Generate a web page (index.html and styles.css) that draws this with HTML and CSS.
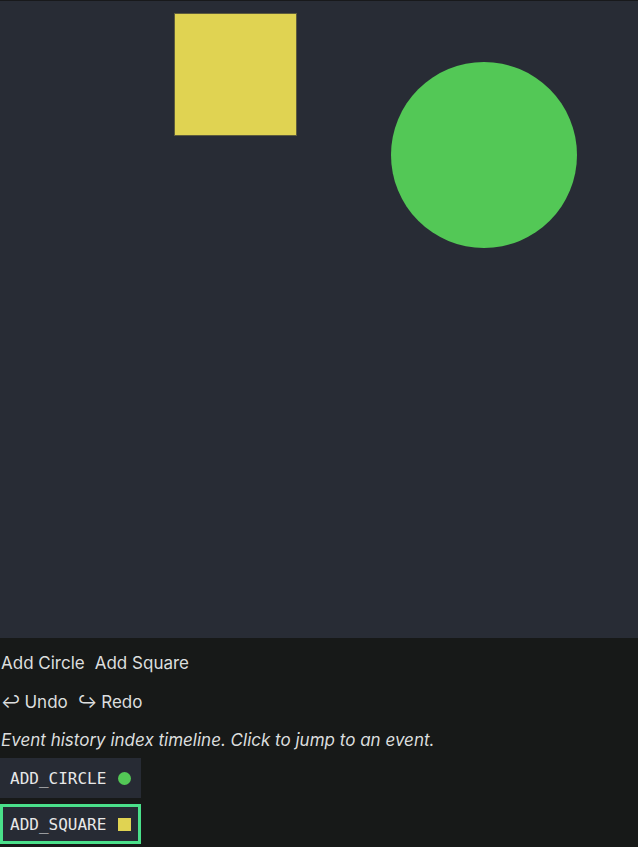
FILE: index.html
```html
<!DOCTYPE html>
<html>
<head>
<meta charset="utf-8">
<link rel="stylesheet" href="styles.css">
</head>
<body>
<div class="stage">
  <svg class="board" width="638" height="637" viewBox="0 0 638 637">
    <rect x="174.5" y="12.5" width="122" height="122" fill="#e0d352" stroke="#5e5c3c" stroke-width="1"/>
    <circle cx="484" cy="154" r="93" fill="#53c856"/>
  </svg>
</div>
<div class="controls">
  <div class="row">
    <button class="btn">Add Circle</button>
    <button class="btn">Add Square</button>
  </div>
  <div class="row">
    <button class="btn"><span class="arrow">↩</span>Undo</button>
    <button class="btn"><span class="arrow">↪</span>Redo</button>
  </div>
  <p class="hint">Event history index timeline. Click to jump to an event.</p>
  <ul class="timeline">
    <li class="event"><span class="name">ADD_CIRCLE</span><span class="dot dot-circle"></span></li>
    <li class="event active"><span class="name">ADD_SQUARE</span><span class="dot dot-square"></span></li>
  </ul>
</div>
</body>
</html>
```
FILE: styles.css
```css
* { box-sizing: border-box; }
html, body {
  margin: 0;
  padding: 0;
  background: #171918;
}
body {
  font-family: Inter, "Noto Sans", sans-serif;
  color: #dcdede;
  font-size: 17px;
}
.stage {
  width: 638px;
  height: 638px;
  border-top: 1px solid #18191b;
  background: #282c35;
}
.board { display: block; }
.controls {
  display: flex;
  flex-direction: column;
  padding-top: 2px;
}
.row {
  display: flex;
  align-items: center;
  gap: 9px;
  height: 39px;
  padding-top: 6px;
}
.btn {
  font: inherit;
  color: inherit;
  background: transparent;
  border: none;
  padding: 0 0 0 1px;
  margin: 0;
  display: flex;
  align-items: center;
}
.arrow {
  margin-right: 4px;
}
.hint {
  margin: 0;
  height: 38px;
  padding-top: 6px;
  display: flex;
  align-items: center;
  font-style: italic;
  padding-left: 1px;
}
.timeline {
  list-style: none;
  margin: 2px 0 0 0;
  padding: 0;
  display: flex;
  flex-direction: column;
  align-items: flex-start;
  gap: 6px;
}
.event {
  display: flex;
  align-items: center;
  gap: 12px;
  height: 40px;
  padding: 0 7px 0 7px;
  background: #272b34;
  border: 3px solid transparent;
  font-family: "DejaVu Sans Mono", monospace;
  font-size: 16px;
  color: #e8e8e8;
}
.event.active { border-color: #4ae08a; }
.dot {
  width: 13px;
  height: 13px;
  display: block;
}
.dot-circle { background: #53c856; border-radius: 50%; }
.dot-square { background: #e0d352; }
```
